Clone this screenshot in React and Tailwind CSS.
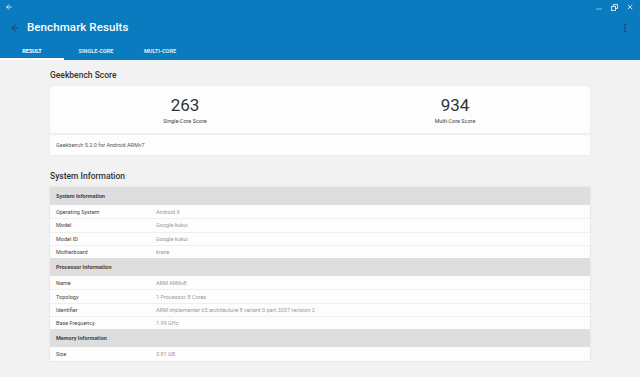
import { ArrowLeft, Minus, X, MoreVertical } from "lucide-react";

const sections = [
  {
    title: "System Information",
    rows: [
      ["Operating System", "Android 9"],
      ["Model", "Google kukui"],
      ["Model ID", "Google kukui"],
      ["Motherboard", "krane"],
    ],
  },
  {
    title: "Processor Information",
    rows: [
      ["Name", "ARM ARMv8"],
      ["Topology", "1 Processor, 8 Cores"],
      ["Identifier", "ARM implementer 65 architecture 8 variant 0 part 3337 revision 2"],
      ["Base Frequency", "1.99 GHz"],
    ],
  },
  {
    title: "Memory Information",
    rows: [["Size", "3.81 GB"]],
  },
];

function Restore() {
  return (
    <svg width="7" height="7" viewBox="0 0 7 7" fill="none" stroke="currentColor" strokeWidth="1">
      <rect x="0.5" y="2.5" width="4" height="4" />
      <path d="M2.5 2.5V0.5h4v4h-2" />
    </svg>
  );
}

export default function App() {
  return (
    <div className="w-[640px] h-[377px] overflow-hidden bg-[#f2f2f2] font-['Roboto',sans-serif]">
      <header className="bg-[#0a7bbf] text-white">
        <div className="h-[14px] flex items-center justify-between px-[5px]">
          <ArrowLeft size={8} strokeWidth={2.5} className="text-white/90" />
          <div className="flex items-center gap-[8px] pr-[1px]">
            <Minus size={8} strokeWidth={2} className="text-white/80 mt-[3px]" />
            <span className="text-white/80"><Restore /></span>
            <X size={8} strokeWidth={2.5} className="text-white/90" />
          </div>
        </div>
        <div className="h-[28px] flex items-center pl-[10px] pr-[10px]">
          <ArrowLeft size={10} strokeWidth={2.5} className="text-[#17486e]" />
          <h1 className="ml-[7px] text-[11.5px] font-medium tracking-[0.1px]">Benchmark Results</h1>
          <MoreVertical size={10} strokeWidth={3} className="ml-auto text-[#17486e]" />
        </div>
        <nav className="flex h-[18px]">
          {["RESULT", "SINGLE-CORE", "MULTI-CORE"].map((t, i) => (
            <div
              key={t}
              className={`w-[64px] flex items-center justify-center text-[5.5px] font-bold ${
                i === 0 ? "text-white border-b-[2px] border-white pt-[2px]" : "text-white/85"
              }`}
            >
              {t}
            </div>
          ))}
        </nav>
      </header>

      <main className="px-[50px]">
        <h2 className="text-[8.5px] font-medium text-[#333] mt-[9px] mb-[5px] leading-[12px]">Geekbench Score</h2>
        <div className="bg-[#fdfdfd] rounded-[1px] shadow-[0_0_1px_rgba(0,0,0,0.25)]">
          <div className="h-[49px] grid grid-cols-2 border-b-[2px] border-[#f0f0f0]">
            <div className="flex flex-col items-center pt-[9px]">
              <span className="text-[17px] leading-[20px] text-[#333]">263</span>
              <span className="text-[5.5px] text-[#444] mt-[2px]">Single-Core Score</span>
            </div>
            <div className="flex flex-col items-center pt-[9px]">
              <span className="text-[17px] leading-[20px] text-[#333]">934</span>
              <span className="text-[5.5px] text-[#444] mt-[2px]">Multi-Core Score</span>
            </div>
          </div>
          <div className="h-[20px] flex items-center px-[6px] text-[5.5px] text-[#555]">
            Geekbench 5.2.0 for Android ARMv7
          </div>
        </div>

        <h2 className="text-[8.5px] font-medium text-[#333] mt-[15px] mb-[5px] leading-[12px]">System Information</h2>
        <div className="bg-[#fdfdfd] shadow-[0_0_1px_rgba(0,0,0,0.25)]">
          {sections.map((s) => (
            <div key={s.title}>
              <div className="h-[18px] bg-[#dedede] flex items-center px-[6px] text-[5.5px] font-bold text-[#444]">
                {s.title}
              </div>
              {s.rows.map(([k, v], i) => (
                <div
                  key={k}
                  className={`h-[13.3px] flex items-center px-[6px] text-[5.5px] ${
                    i > 0 ? "border-t border-[#efefef]" : ""
                  }`}
                >
                  <span className="w-[100px] text-[#444]">{k}</span>
                  <span className="text-[#999]">{v}</span>
                </div>
              ))}
            </div>
          ))}
        </div>
      </main>
    </div>
  );
}
